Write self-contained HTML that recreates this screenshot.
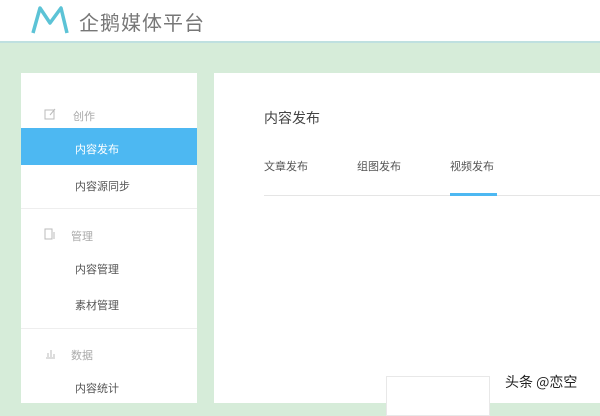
<!DOCTYPE html>
<html><head><meta charset="utf-8"><style>
*{margin:0;padding:0;box-sizing:border-box}
body{width:600px;height:400px;overflow:hidden;background:#d6ecd9;font-family:"Liberation Sans","Noto Sans CJK SC",sans-serif;position:relative}
.hd{position:absolute;left:0;top:0;width:600px;height:43px;background:#fff;border-bottom:2px solid #bfe0e0}
.logo{position:absolute;left:79px;top:7px;font-size:20px;color:#777;letter-spacing:1px}
.side{position:absolute;left:21px;top:73px;width:176px;height:330px;background:#fff}
.main{position:absolute;left:214px;top:73px;width:386px;height:330px;background:#fff}
.t{position:absolute;font-size:11px;color:#555}
.g{color:#aaa}
.act{position:absolute;left:0;top:55px;width:176px;height:37px;background:#4db8f2}
.dv{position:absolute;left:0;width:176px;height:1px;background:#eee}
</style></head><body>
<div class="hd">
<svg style="position:absolute;left:30px;top:5px" width="40" height="30" viewBox="0 0 40 30"><path d="M3 28 L10 3 L20 18 L31 3 L37 28" fill="none" stroke="#5cc3d6" stroke-width="3.5" stroke-linejoin="round"/></svg>
<div class="logo">企鹅媒体平台</div>
</div>
<div class="side">
<svg style="position:absolute;left:23px;top:35px" width="12" height="12"><rect x="1" y="2" width="9" height="9" fill="none" stroke="#bbb"/><path d="M6 7 L11 1" stroke="#bbb"/></svg>
<div class="t g" style="left:52px;top:35px">创作</div>
<div class="act"></div>
<div class="t" style="left:54px;top:68px;color:#fff">内容发布</div>
<div class="t" style="left:54px;top:105px">内容源同步</div>
<div class="dv" style="top:135px"></div>
<svg style="position:absolute;left:23px;top:155px" width="12" height="12"><rect x="1" y="1" width="7" height="10" fill="none" stroke="#bbb"/><path d="M10 4 V11" stroke="#bbb"/></svg>
<div class="t g" style="left:50px;top:155px">管理</div>
<div class="t" style="left:54px;top:188px">内容管理</div>
<div class="t" style="left:54px;top:224px">素材管理</div>
<div class="dv" style="top:255px"></div>
<svg style="position:absolute;left:23px;top:274px" width="12" height="12"><path d="M2 11 H11 M4 10 V6 M7 10 V3 M10 10 V7" stroke="#bbb"/></svg>
<div class="t g" style="left:50px;top:274px">数据</div>
<div class="t" style="left:54px;top:307px">内容统计</div>
</div>
<div class="main">
<div class="t" style="left:50px;top:35px;font-size:14px;color:#444">内容发布</div>
<div class="t" style="left:50px;top:85px">文章发布</div>
<div class="t" style="left:143px;top:85px">组图发布</div>
<div class="t" style="left:236px;top:85px">视频发布</div>
<div style="position:absolute;left:50px;top:122px;width:336px;height:1px;background:#e5e5e5"></div>
<div style="position:absolute;left:236px;top:120px;width:47px;height:3px;background:#4db8f2"></div>
<div style="position:absolute;left:172px;top:303px;width:104px;height:40px;border:1px solid #e8e8e8;background:#fff"></div>
</div>
<div style="position:absolute;left:505px;top:372px;font-size:14px;color:#222;font-family:'Noto Sans CJK SC',sans-serif">头条 @恋空</div>
</body></html>
